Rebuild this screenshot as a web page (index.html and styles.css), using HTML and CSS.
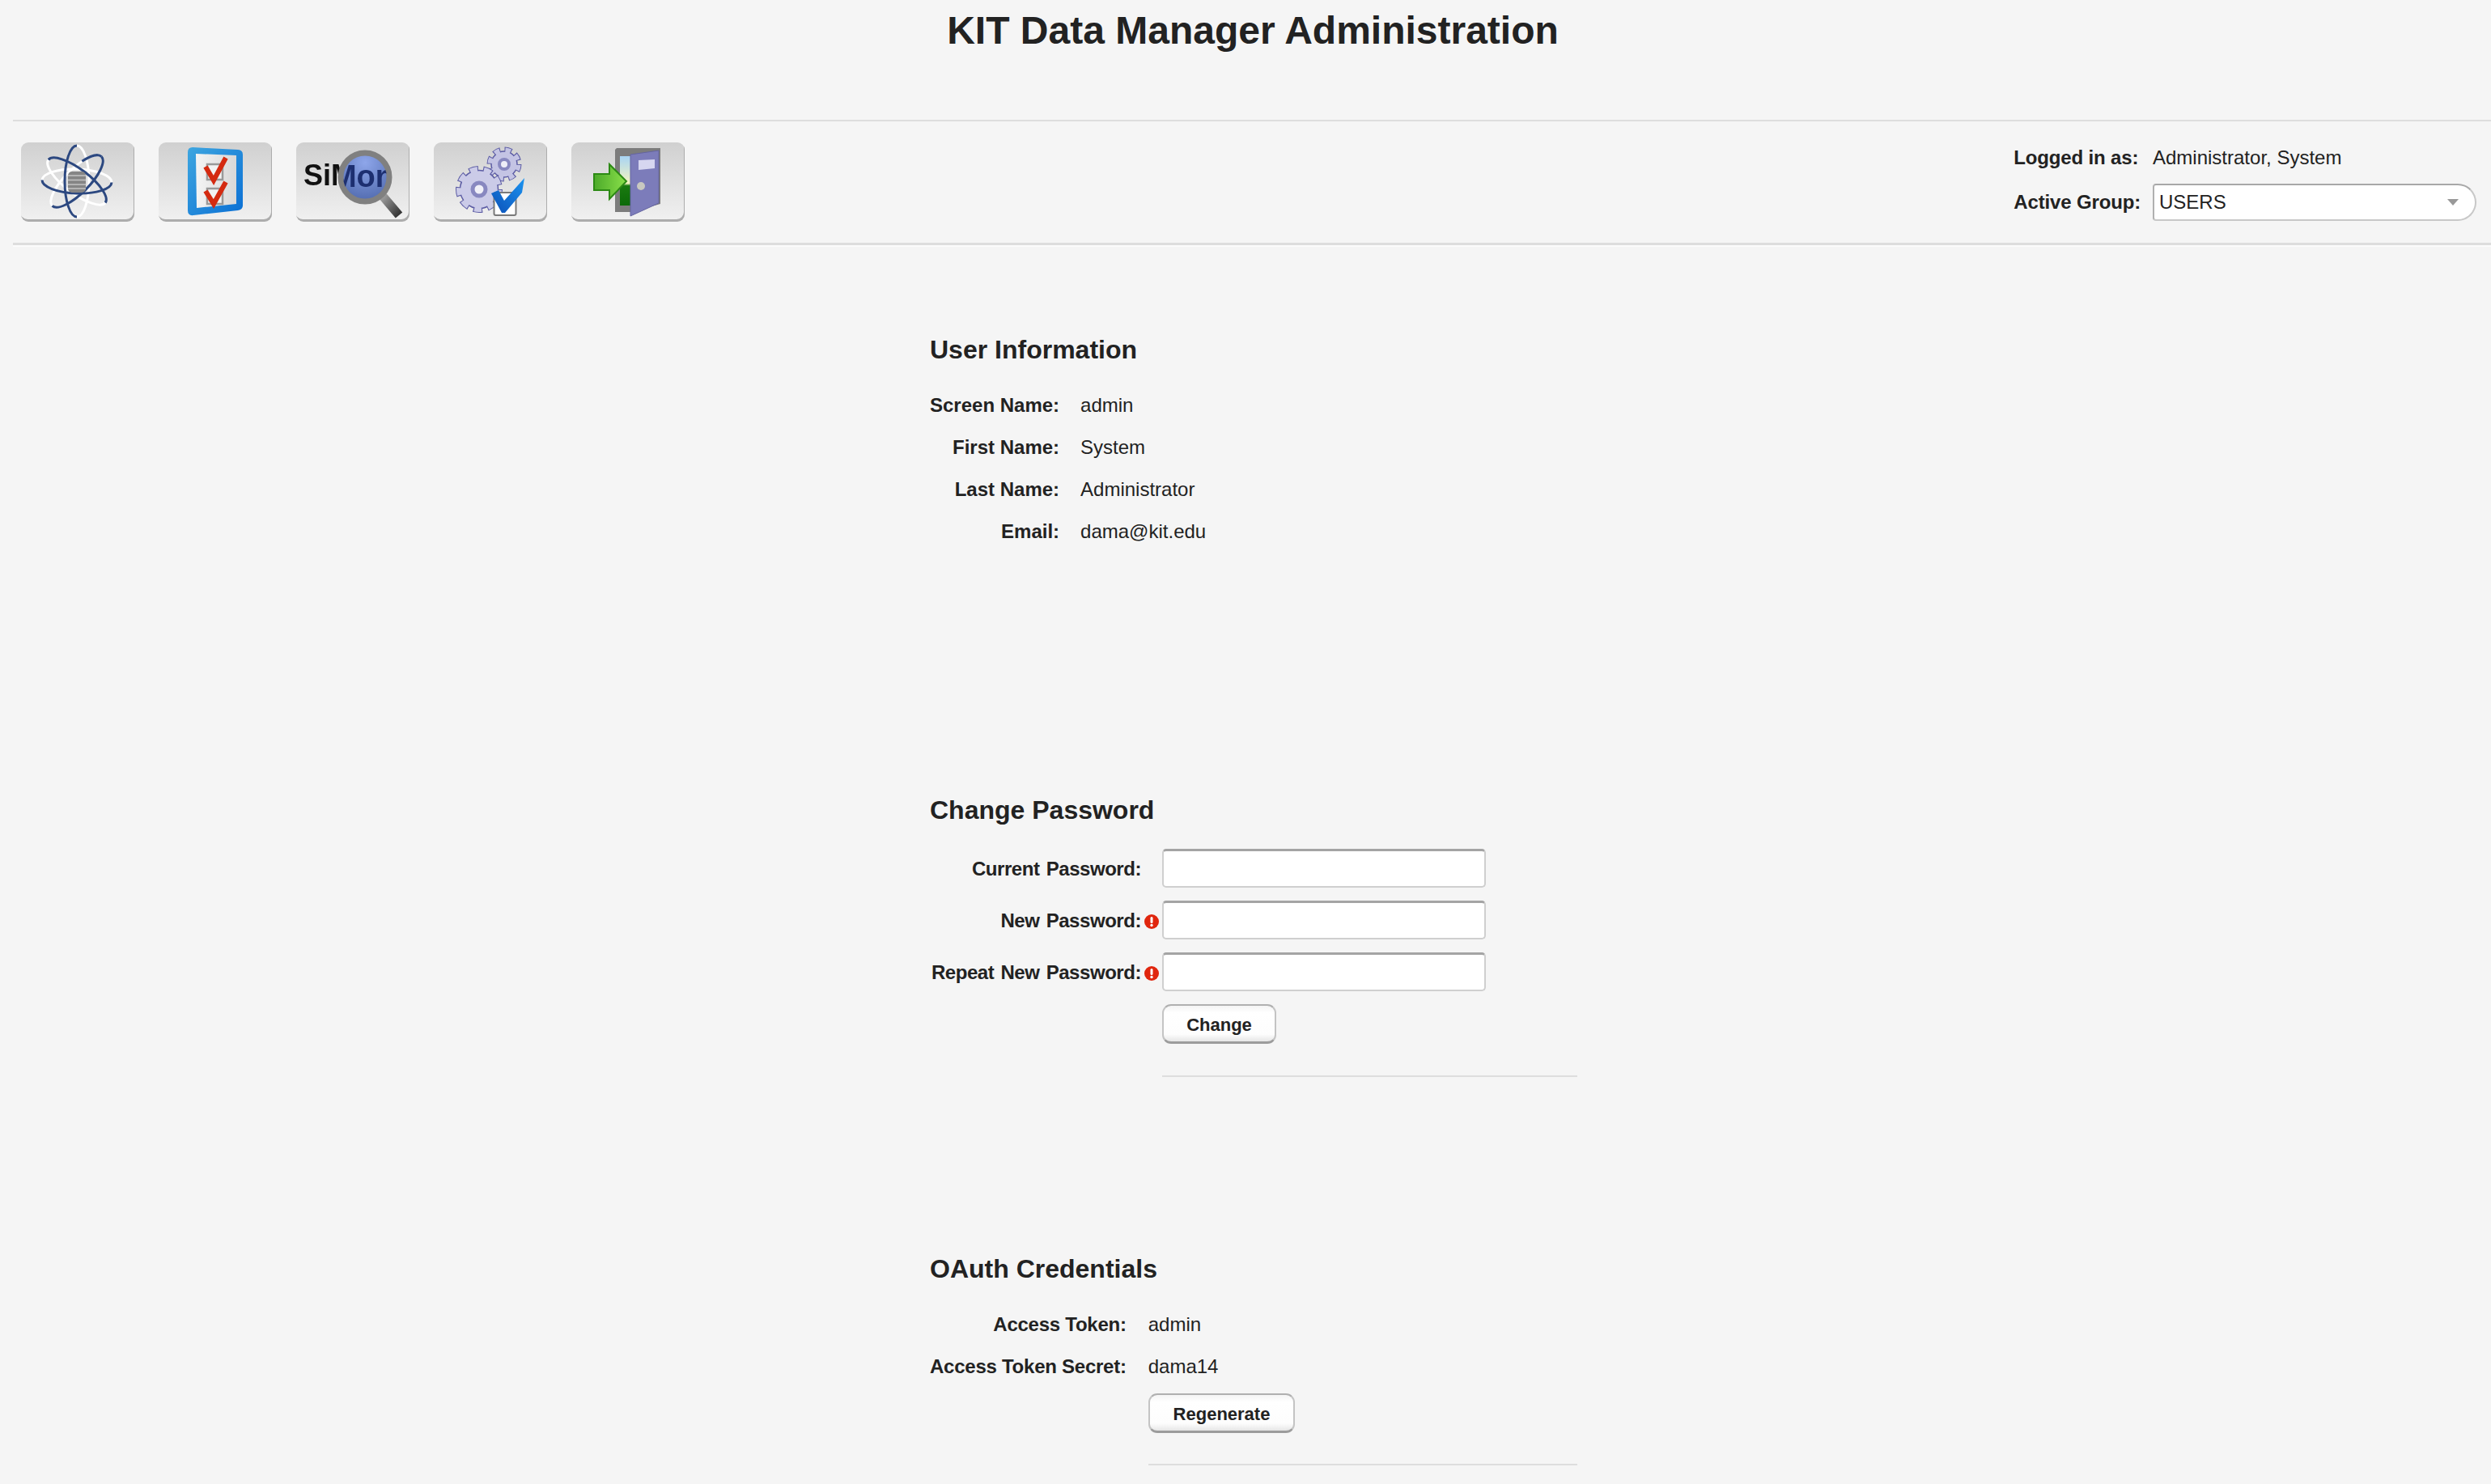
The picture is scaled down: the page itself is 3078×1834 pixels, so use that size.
FILE: index.html
```html
<!DOCTYPE html>
<html lang="en">
<head>
<meta charset="utf-8">
<title>KIT Data Manager Administration</title>
<link rel="stylesheet" href="styles.css">
</head>
<body>
<h1 class="title">KIT Data Manager Administration</h1>
<header class="toolbar">
  <nav class="tools">
    <button class="tool" type="button" aria-label="Data">
      <svg class="ico" viewBox="0 0 140 98">
        <g fill="none" stroke-width="3" transform="translate(69 48)">
          <g stroke="#fff">
            <path d="M-43 0A43 15 0 0 1 43 0" transform="rotate(2)"/>
            <path d="M-44 0A44 15 0 0 1 44 0" transform="rotate(90)"/>
            <path d="M-44 0A44 15 0 0 0 44 0" transform="rotate(37)"/>
            <path d="M-43 0A43 15 0 0 1 43 0" transform="rotate(-45)"/>
          </g>
          <g stroke="#2c4880">
            <path d="M-43 0A43 15 0 0 0 43 0" transform="rotate(2)"/>
            <path d="M-44 0A44 15 0 0 0 44 0" transform="rotate(90)"/>
            <path d="M-44 0A44 15 0 0 1 44 0" transform="rotate(37)"/>
            <path d="M-43 0A43 15 0 0 0 43 0" transform="rotate(-45)"/>
            <path d="M22 -13A43 15 0 0 1 43 0" transform="rotate(-45)"/>
          </g>
        </g>
        <rect x="58" y="36" width="22" height="26" rx="5" fill="#858585"/>
        <path d="M58 41h22M58 46.500h22M58 52h22M58 57h22" stroke="#c4c4c4" stroke-width="1.500"/>
      </svg>
    </button>
    <button class="tool" type="button" aria-label="Tasks">
      <svg class="ico" viewBox="0 0 140 98">
        <defs>
          <linearGradient id="fr" x1="0" y1="0" x2="1" y2="1"><stop offset="0" stop-color="#3ea6e0"/><stop offset="1" stop-color="#0a6fd4"/></linearGradient>
          <linearGradient id="pg" x1="0" y1="0" x2="1" y2="0"><stop offset="0" stop-color="#f4f4f4"/><stop offset="1" stop-color="#d8d8d8"/></linearGradient>
        </defs>
        <path d="M42 6 98 9q6 .5 6 6V78q0 5-6 6L43 90q-7 1-7-6V12q0-6 6-6Z" fill="url(#fr)"/>
        <path d="M46 14 96 16V76L47 81Z" fill="url(#pg)"/>
        <path d="M60 27h19v19H60ZM60 57h19v19H60Z" fill="#f2f2f2" stroke="#999" stroke-width="2.500"/>
        <path d="M58 30 68 47 83 19" fill="none" stroke="#d42a10" stroke-width="6"/>
        <path d="M58 60 68 76 83 49" fill="none" stroke="#d42a10" stroke-width="6"/>
      </svg>
    </button>
    <button class="tool" type="button" aria-label="SiMon">
      <svg class="ico" viewBox="0 0 140 98">
        <defs>
          <clipPath id="lens"><circle cx="85" cy="43" r="27"/></clipPath>
          <radialGradient id="gl" cx=".5" cy=".2" r=".9"><stop offset="0" stop-color="#8ea6ea"/><stop offset="1" stop-color="#4a64a8"/></radialGradient>
          <linearGradient id="hd" x1="0" y1="0" x2="1" y2="1"><stop offset="0" stop-color="#aaa"/><stop offset="1" stop-color="#333"/></linearGradient>
        </defs>
        <text class="simon" x="9" y="53">SiMon</text>
        <path d="M105 64 127 90" stroke="url(#hd)" stroke-width="11"/>
        <circle cx="85" cy="43" r="30" fill="url(#gl)" stroke="#808080" stroke-width="7"/>
        <g clip-path="url(#lens)"><text class="simon lensed" x="7" y="55">SiMon</text></g>
      </svg>
    </button>
    <button class="tool" type="button" aria-label="Settings">
      <svg class="ico" viewBox="0 0 140 98">
        <circle cx="87" cy="27" r="17.500" fill="none" stroke="#5c5ca4" stroke-width="8" stroke-dasharray="8.500 5.240"/>
        <circle cx="87" cy="27" r="16" fill="#c4c4e4" stroke="#5c5ca4" stroke-width="1.500"/>
        <circle cx="87" cy="27" r="17.500" fill="none" stroke="#c4c4e4" stroke-width="6" stroke-dasharray="6.500 7.240" stroke-dashoffset="-1"/>
        <circle cx="87" cy="27" r="6" fill="#eeeef8" stroke="#8888c0" stroke-width="4"/>
        <circle cx="56" cy="58" r="24.500" fill="none" stroke="#5c5ca4" stroke-width="9" stroke-dasharray="11 6.100"/>
        <circle cx="56" cy="58" r="23.500" fill="#cbcbe8" stroke="#5c5ca4" stroke-width="1.500"/>
        <circle cx="56" cy="58" r="24.500" fill="none" stroke="#cbcbe8" stroke-width="7" stroke-dasharray="9 8.100" stroke-dashoffset="-1"/>
        <circle cx="56" cy="58" r="8" fill="#f0f0f8" stroke="#8888c0" stroke-width="5"/>
        <defs><linearGradient id="ck" x1="0" y1="1" x2="1" y2="0"><stop offset="0" stop-color="#0c50b8"/><stop offset="1" stop-color="#1c94f0"/></linearGradient></defs>
        <rect x="74.500" y="62" width="27" height="28" rx="2" fill="#fff" stroke="#7a7a7a" stroke-width="2"/>
        <path d="M71 63 80 59 87 72 112 44 109 62 88 87H84Z" fill="url(#ck)"/>
      </svg>
    </button>
    <button class="tool" type="button" aria-label="Logout">
      <svg class="ico" viewBox="0 0 140 98">
        <defs>
          <linearGradient id="sky" x1="0" y1="0" x2="0" y2="1"><stop offset="0" stop-color="#a8d4f4"/><stop offset=".55" stop-color="#f4f4c0"/><stop offset=".6" stop-color="#1a7a10"/><stop offset="1" stop-color="#0c6a08"/></linearGradient>
          <linearGradient id="arw" x1="0" y1="0" x2="1" y2="0"><stop offset="0" stop-color="#4caa2a"/><stop offset="1" stop-color="#8ae04a"/></linearGradient>
        </defs>
        <path d="M56 7H110V76L74 86H54V9Z" fill="#7c7c7c"/>
        <rect x="60" y="17" width="15" height="61" fill="url(#sky)"/>
        <path d="M73 15 108 10V75L73 91Z" fill="#7c7cba" stroke="#6464a0"/>
        <path d="M83 22 103 21V32L83 34Z" fill="#d6d6f0"/>
        <circle cx="86" cy="54" r="5" fill="#c8c8c0"/>
        <path d="M28 39H47V27L68 48 47 70V59H28Z" fill="url(#arw)" stroke="#2c8a14" stroke-width="2"/>
      </svg>
    </button>
  </nav>
  <div class="session">
    <span class="lbl">Logged in as:</span><span class="val">Administrator, System</span>
    <span class="lbl">Active Group:</span>
    <div class="combo"><span>USERS</span><i class="caret"></i></div>
  </div>
</header>
<main class="content">
  <section class="sec sec-user">
    <h2>User Information</h2>
    <dl class="info">
      <dt>Screen Name:</dt><dd>admin</dd>
      <dt>First Name:</dt><dd>System</dd>
      <dt>Last Name:</dt><dd>Administrator</dd>
      <dt>Email:</dt><dd>dama@kit.edu</dd>
    </dl>
  </section>
  <section class="sec sec-pass">
    <h2>Change Password</h2>
    <form class="pw">
      <label>Current Password:</label><span></span><input type="password">
      <label>New Password:</label><svg class="err" viewBox="0 0 18 18"><circle cx="9" cy="9" r="9" fill="#e0260e"/><rect x="7.500" y="3" width="3" height="8" rx="1.500" fill="#fff"/><circle cx="9" cy="13.500" r="1.700" fill="#fff"/></svg><input type="password">
      <label>Repeat New Password:</label><svg class="err" viewBox="0 0 18 18"><circle cx="9" cy="9" r="9" fill="#e0260e"/><rect x="7.500" y="3" width="3" height="8" rx="1.500" fill="#fff"/><circle cx="9" cy="13.500" r="1.700" fill="#fff"/></svg><input type="password">
      <div class="pw-action"><button class="btn btn-change" type="button">Change</button><hr class="rule"></div>
    </form>
  </section>
  <section class="sec sec-oauth">
    <h2>OAuth Credentials</h2>
    <dl class="info info-oauth">
      <dt>Access Token:</dt><dd>admin</dd>
      <dt>Access Token Secret:</dt><dd>dama14</dd>
    </dl>
    <div class="oauth-action"><button class="btn btn-regen" type="button">Regenerate</button><hr class="rule"></div>
  </section>
</main>
</body>
</html>
```

FILE: styles.css
```css
* { box-sizing: border-box; }
html, body { margin: 0; padding: 0; }
body {
  background: #f5f5f5;
  color: #222;
  font: 24px/1.2 "Liberation Sans", Arial, sans-serif;
  overflow: hidden;
  height: 1834px;
}
.title {
  margin: 0 0 0 18px;
  padding-top: 10px;
  height: 148px;
  font-size: 48px;
  line-height: 56px;
  font-weight: 700;
  text-align: center;
}
.toolbar {
  margin-left: 16px;
  height: 155px;
  border-top: 2px solid #ddd;
  border-bottom: 3px solid #ddd;
  box-shadow: 0 2px 0 #fbfbfb;
  display: flex;
  justify-content: space-between;
  padding: 0 18px 0 10px;
}
.tools { display: flex; gap: 30px; padding-top: 26px; align-items: flex-start; }
.tool {
  width: 140px;
  height: 98px;
  padding: 0;
  border: 0;
  border-radius: 9px;
  background: linear-gradient(#d0d0d0, #f1f1f1);
  box-shadow: inset -1px -3px 0 #adadad;
  overflow: hidden;
}
.ico { display: block; width: 140px; height: 98px; filter: blur(.7px); }
.simon { font: 700 36px "Liberation Sans", Arial, sans-serif; fill: #111; }
.lensed { fill: #1d2f70; font-size: 38px; }
.session {
  display: grid;
  grid-template-columns: auto 400px;
  column-gap: 15px;
  row-gap: 9px;
  padding-top: 22px;
  align-content: start;
  align-items: center;
}
.session .lbl { font-weight: 700; line-height: 46px; letter-spacing: -.15px; }
.session .val { line-height: 46px; }
.combo {
  height: 46px;
  background: #fff;
  border: 2px solid #c8c8c8;
  border-top-color: #a8a8a8;
  border-left-color: #b0b0b0;
  border-radius: 4px 23px 23px 4px;
  display: flex;
  align-items: center;
  justify-content: space-between;
  padding: 0 20px 0 6px;
  line-height: 42px;
}
.caret {
  width: 0;
  height: 0;
  border-left: 7px solid transparent;
  border-right: 7px solid transparent;
  border-top: 8px solid #999;
}
.content { padding-left: 1149px; width: 1949px; }
.sec h2 {
  margin: 0;
  font-size: 32px;
  line-height: 40px;
  font-weight: 700;
}
.sec-user { padding-top: 109px; }
.sec-pass { margin-top: 298px; }
.sec-oauth { margin-top: 217px; }
.info {
  display: grid;
  grid-template-columns: auto 1fr;
  column-gap: 26px;
  margin: 23px 0 0;
  line-height: 52px;
}
.info dt { font-weight: 700; text-align: right; }
.info dd { margin: 0; }
.pw {
  display: grid;
  grid-template-columns: 261px 18px 400px;
  column-gap: 4px;
  row-gap: 16px;
  align-items: center;
  margin-top: 28px;
}
.pw label {
  font-weight: 700;
  text-align: right;
  white-space: nowrap;
  padding-top: 3px;
  letter-spacing: -.45px;
  word-spacing: 2px;
}
.err { width: 18px; height: 18px; display: block; margin-top: 3px; }
.pw input {
  width: 400px;
  height: 48px;
  background: #fff;
  border: 2px solid #cfcfcf;
  border-top: 3px solid #a4a4a4;
  border-radius: 5px;
  padding: 0;
  outline: none;
}
.pw-action { grid-column: 3; width: 513px; }
.btn {
  display: block;
  height: 49px;
  padding: 4px 0 0;
  background: linear-gradient(#f4f4f4, #fff 20%, #fdfdfd 80%, #e6e6e6);
  border: 2px solid #c4c4c4;
  border-top-color: #b0b0b0;
  border-bottom: 3px solid #9c9c9c;
  border-radius: 11px;
  font: 700 22px "Liberation Sans", Arial, sans-serif;
  color: #222;
}
.btn-change { width: 141px; }
.btn-regen { width: 181px; }
.rule {
  margin: 39px 0 0;
  border: 0;
  height: 2px;
  background: #ddd;
}
.info-oauth { margin-bottom: 7px; column-gap: 27px; }
.info-oauth dt { letter-spacing: -.25px; }
.oauth-action { margin-left: 270px; width: 530px; }
.oauth-action .rule { margin-top: 38px; }
```
